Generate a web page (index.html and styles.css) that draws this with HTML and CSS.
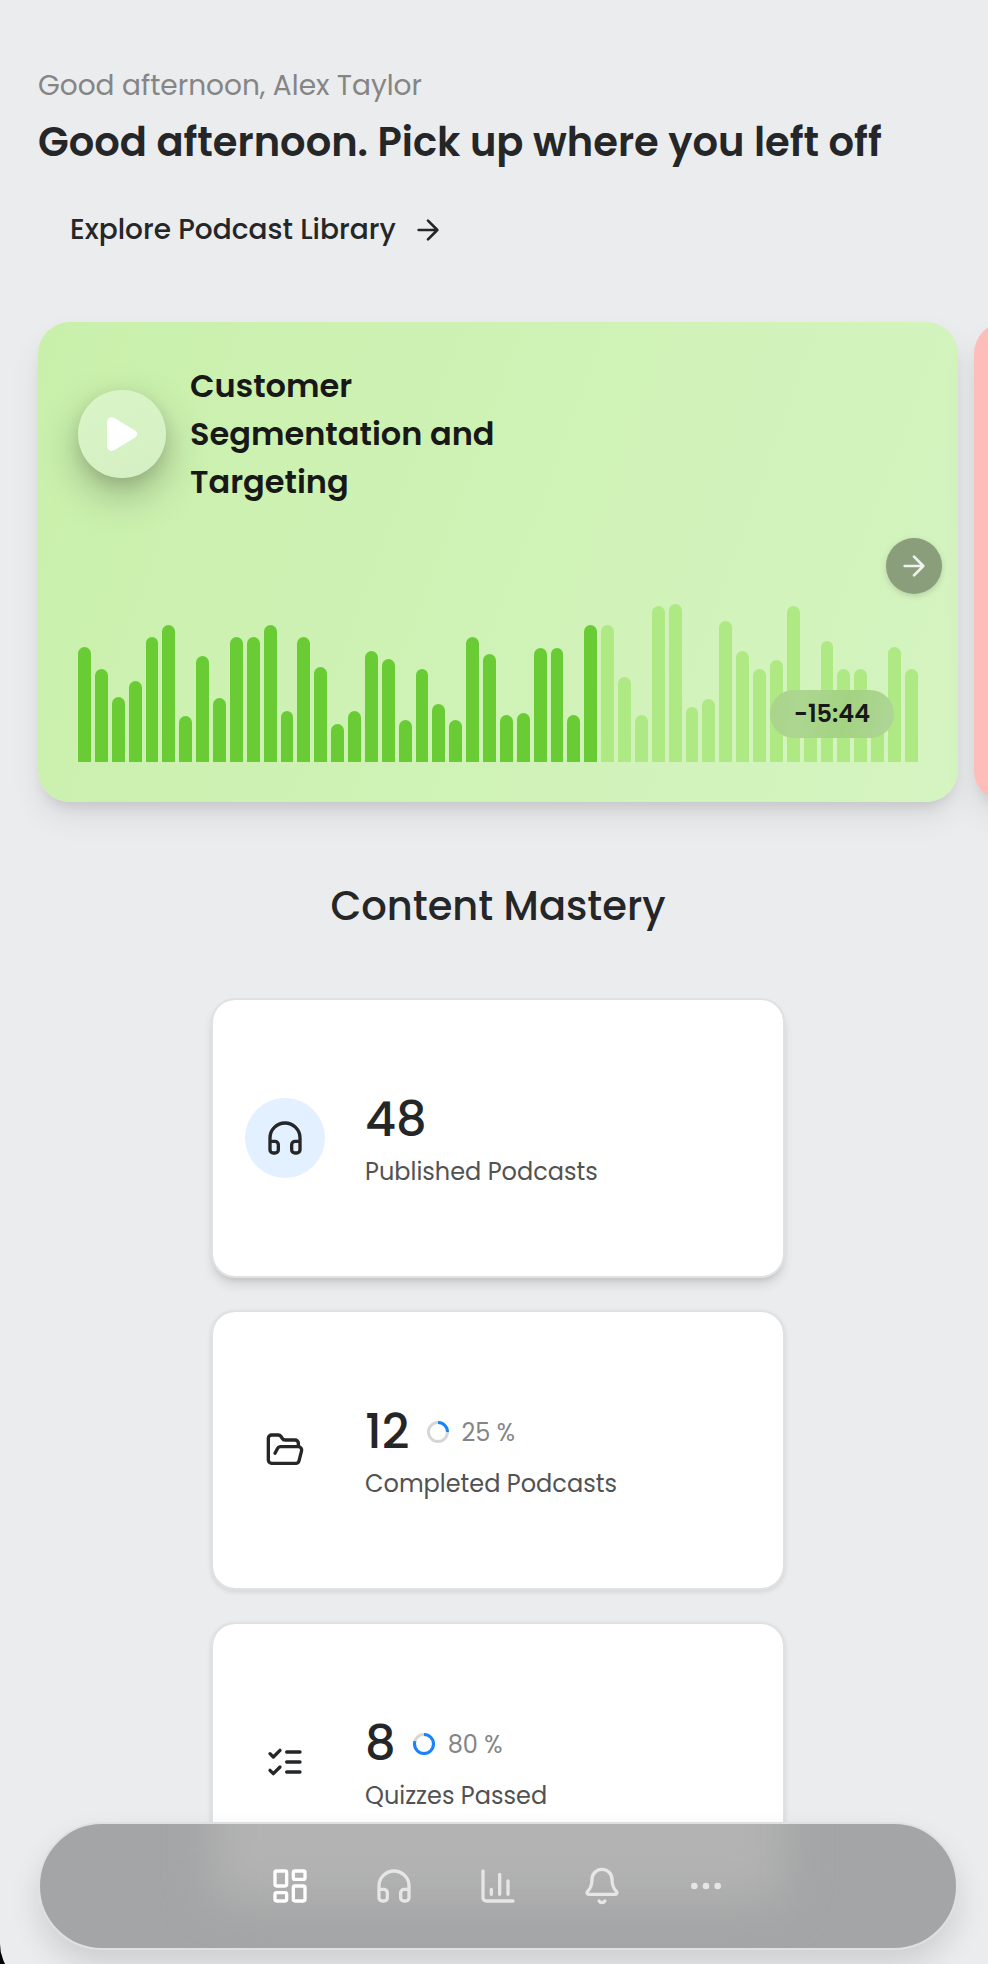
FILE: index.html
```
<!DOCTYPE html>
<html lang="en">
<head>
  <meta charset="UTF-8">
  <title>Podcast Dashboard</title>
  <link rel="stylesheet" href="styles.css">
</head>
<body>
  <div class="app">
    <header class="greeting">
      <p class="greeting-name">Good afternoon, Alex Taylor</p>
      <h1>Good afternoon. Pick up where you left off</h1>
      <a href="#" class="explore-link">
        <span>Explore Podcast Library</span>
        <svg class="icon-explore" viewBox="0 0 24 24"><path d="M5 12h14M12 5l7 7-7 7"/></svg>
      </a>
    </header>

    <section class="carousel">
      <article class="podcast-card green">
        <div class="podcast-head">
          <button class="play-btn">
            <svg viewBox="0 0 30 34"><path d="M0 5v24c0 4 4 6 7.500 4L28 20.500c2.700-1.700 2.700-5.300 0-7L7.500 1C4-1 0 1 0 5z"/></svg>
          </button>
          <h2>Customer<br>Segmentation and<br>Targeting</h2>
        </div>
        <div class="wave" id="wave"></div>
        <div class="time-left">-15:44</div>
        <button class="next-btn">
          <svg viewBox="0 0 24 24"><path d="M5 12h14M12 5l7 7-7 7"/></svg>
        </button>
      </article>
      <article class="podcast-card red"></article>
    </section>

    <section class="mastery">
      <h2>Content Mastery</h2>

      <div class="stat-card active">
        <div class="stat-icon">
          <svg viewBox="0 0 24 24"><path d="M3 14h3a2 2 0 0 1 2 2v3a2 2 0 0 1-2 2H5a2 2 0 0 1-2-2v-7a9 9 0 0 1 18 0v7a2 2 0 0 1-2 2h-1a2 2 0 0 1-2-2v-3a2 2 0 0 1 2-2h3"/></svg>
        </div>
        <div class="stat-info">
          <div class="stat-row"><span class="stat-num">48</span></div>
          <div class="stat-label">Published Podcasts</div>
        </div>
      </div>

      <div class="stat-card">
        <div class="stat-icon">
          <svg viewBox="0 0 24 24"><path d="m6 14 1.500-2.900A2 2 0 0 1 9.240 10H20a2 2 0 0 1 1.940 2.500l-1.540 6a2 2 0 0 1-1.950 1.500H4a2 2 0 0 1-2-2V5a2 2 0 0 1 2-2h3.900a2 2 0 0 1 1.690.9l.81 1.200a2 2 0 0 0 1.670.9H18a2 2 0 0 1 2 2v2"/></svg>
        </div>
        <div class="stat-info">
          <div class="stat-row">
            <span class="stat-num">12</span>
            <svg class="ring" viewBox="0 0 22 22"><circle cx="11" cy="11" r="9.500"/><circle class="ring-value" cx="11" cy="11" r="9.500" pathLength="100" stroke-dasharray="25 100"/></svg>
            <span class="stat-pct">25 %</span>
          </div>
          <div class="stat-label">Completed Podcasts</div>
        </div>
      </div>

      <div class="stat-card">
        <div class="stat-icon">
          <svg viewBox="0 0 24 24"><path d="m3 17 2 2 4-4M3 7l2 2 4-4M13 6h8M13 12h8M13 18h8"/></svg>
        </div>
        <div class="stat-info">
          <div class="stat-row">
            <span class="stat-num">8</span>
            <svg class="ring" viewBox="0 0 22 22"><circle cx="11" cy="11" r="9.500"/><circle class="ring-value" cx="11" cy="11" r="9.500" pathLength="100" stroke-dasharray="80 100"/></svg>
            <span class="stat-pct">80 %</span>
          </div>
          <div class="stat-label">Quizzes Passed</div>
        </div>
      </div>
    </section>
  </div>

  <nav class="tab-bar">
    <a href="#" class="current"><svg viewBox="0 0 24 24"><rect x="3" y="3" width="7" height="9" rx="1"/><rect x="14" y="3" width="7" height="5" rx="1"/><rect x="14" y="12" width="7" height="9" rx="1"/><rect x="3" y="16" width="7" height="5" rx="1"/></svg></a>
    <a href="#"><svg viewBox="0 0 24 24"><path d="M3 14h3a2 2 0 0 1 2 2v3a2 2 0 0 1-2 2H5a2 2 0 0 1-2-2v-7a9 9 0 0 1 18 0v7a2 2 0 0 1-2 2h-1a2 2 0 0 1-2-2v-3a2 2 0 0 1 2-2h3"/></svg></a>
    <a href="#"><svg viewBox="0 0 24 24"><path d="M3 3v16a2 2 0 0 0 2 2h16M8 17v-3M13 17V5M18 17V9"/></svg></a>
    <a href="#"><svg viewBox="0 0 24 24"><path d="M10.268 21a2 2 0 0 0 3.464 0M3.262 15.326A1 1 0 0 0 4 17h16a1 1 0 0 0 .740-1.673C19.410 13.956 18 12.499 18 8A6 6 0 0 0 6 8c0 4.499-1.411 5.956-2.738 7.326"/></svg></a>
    <a href="#"><svg viewBox="0 0 24 24"><circle cx="5" cy="12" r="1"/><circle cx="12" cy="12" r="1"/><circle cx="19" cy="12" r="1"/></svg></a>
  </nav>

  <script>
    const wave = document.getElementById("wave");
    const played = 31;
    const bars = [
      115, 93, 65, 81, 125, 137, 46, 106, 64, 125,
      125, 137, 51, 125, 95, 38, 51, 111, 103, 42,
      93, 58, 42, 125, 108, 47, 49, 114, 114, 47,
      137, 137, 85, 47, 156, 158, 55, 63, 141, 111,
      93, 102, 156, 60, 121, 93, 93, 60, 115, 93
    ];
    bars.forEach((h, i) => {
      const bar = document.createElement("span");
      bar.className = i < played ? "bar played" : "bar";
      bar.style.height = h + "px";
      wave.appendChild(bar);
    });
  </script>
</body>
</html>
```
FILE: styles.css
```
* { box-sizing: border-box; }
html { background: #000; }
body { margin: 0; height: 1964px; overflow: hidden; font-family: Poppins, Inter, "Noto Sans", sans-serif; color: #252628; background: #000; }
h1, h2, p { margin: 0; }
a { color: inherit; text-decoration: none; }
button { border: none; padding: 0; }
svg { display: block; fill: none; stroke: currentColor; stroke-width: 2; stroke-linecap: round; stroke-linejoin: round; }

.app { height: 1986px; padding: 65px 0 0 38px; background: #ebecee; border-bottom-left-radius: 42px; overflow: hidden; }

.greeting-name { font-size: 28px; line-height: 42px; color: #858585; }
h1 { margin-top: 5px; font-size: 40px; line-height: 60px; font-weight: 600; white-space: nowrap; }
.explore-link { display: flex; align-items: center; gap: 16px; height: 80px; margin-top: 18px; padding-left: 32px; font-size: 28px; font-weight: 500; }
.icon-explore { width: 32px; height: 32px; }

.carousel { display: flex; gap: 16px; margin-top: 52px; }
.podcast-card { position: relative; flex: none; width: 920px; height: 480px; padding: 40px; border-radius: 32px; box-shadow: 0 16px 32px rgba(0,0,0,0.07), 0 10px 14px -6px rgba(0,0,0,0.12); }
.green { background: linear-gradient(110deg, #c9f0ab, #d5f4c1); }
.red { background: #ffbdba; }
.podcast-head { display: flex; align-items: center; gap: 24px; height: 144px; }
.play-btn { display: flex; align-items: center; justify-content: center; width: 88px; height: 88px; border-radius: 50%; background: linear-gradient(160deg, #d9f5c6, #d5efc4); box-shadow: 0 16px 40px rgba(0,0,0,0.25), 0 6px 16px rgba(0,0,0,0.1); }
.play-btn svg { width: 30px; height: 34px; fill: #fff; stroke: none; }
.podcast-head h2 { font-size: 32px; line-height: 48px; font-weight: 600; color: #171817; }
.wave { display: flex; align-items: flex-end; gap: 4px; height: 160px; margin-top: 96px; }
.bar { flex: 1; border-radius: 8px 8px 0 0; background: #aee984; }
.bar.played { background: #69cc35; }
.time-left { position: absolute; right: 64px; bottom: 64px; width: 124px; height: 48px; border-radius: 24px; background: linear-gradient(100deg, #a9d48a, #add691 25%, #a3d382 60%, #b0d598); text-align: center; font-size: 24px; line-height: 48px; font-weight: 600; color: #171817; }
.next-btn { position: absolute; right: 16px; top: 216px; display: flex; align-items: center; justify-content: center; width: 56px; height: 56px; border-radius: 50%; background: #8a9e7c; color: #f0f3ed; box-shadow: 0 2px 6px rgba(0,0,0,0.15); }
.next-btn svg { width: 32px; height: 32px; }

.mastery { display: flex; flex-direction: column; align-items: center; gap: 32px; width: 920px; margin-top: 74px; }
.mastery h2 { height: 90px; font-size: 40px; line-height: 61px; font-weight: 500; }
.stat-card { display: flex; align-items: center; gap: 40px; width: 574px; height: 280px; padding: 0 32px; border: 2px solid #e0e1e3; border-radius: 24px; background: #fff; background-clip: padding-box; box-shadow: 0 2px 5px rgba(0,0,0,0.1); }
.stat-card.active { box-shadow: 0 8px 12px -2px rgba(0,0,0,0.12), 0 4px 6px -3px rgba(0,0,0,0.1); }
.stat-icon { display: flex; align-items: center; justify-content: center; width: 80px; height: 80px; border-radius: 50%; }
.active .stat-icon { background: #e2f0ff; }
.stat-icon svg, .tab-bar svg { width: 40px; height: 40px; }
.stat-info { padding-top: 4px; }
.stat-row { display: flex; align-items: center; height: 64px; }
.stat-num { font-size: 48px; font-weight: 500; }
.ring { width: 22px; height: 22px; margin: 0 13px 0 17px; stroke: #d6d6d6; stroke-width: 3; transform: rotate(-90deg); }
.ring-value { stroke: #1684ff; stroke-linecap: butt; }
.stat-pct { font-size: 24px; color: #858585; }
.stat-label { height: 40px; font-size: 24px; line-height: 40px; color: #525252; }

.tab-bar { position: fixed; left: 38px; top: 1822px; z-index: 10; display: flex; align-items: center; justify-content: center; gap: 64px; width: 920px; height: 128px; border: 2px solid #dfe0e1; border-radius: 64px; background: #a4a5a6; overflow: hidden; box-shadow: 0 16px 30px rgba(0,0,0,0.12); color: #e6e6e6; }
/* soft glow of the card behind the bar */
.tab-bar::before { content: ""; position: absolute; z-index: -1; left: 173px; top: -100px; width: 570px; height: 176px; background: #b3b3b3; filter: blur(24px); }
.tab-bar .current { color: #fff; }
```
